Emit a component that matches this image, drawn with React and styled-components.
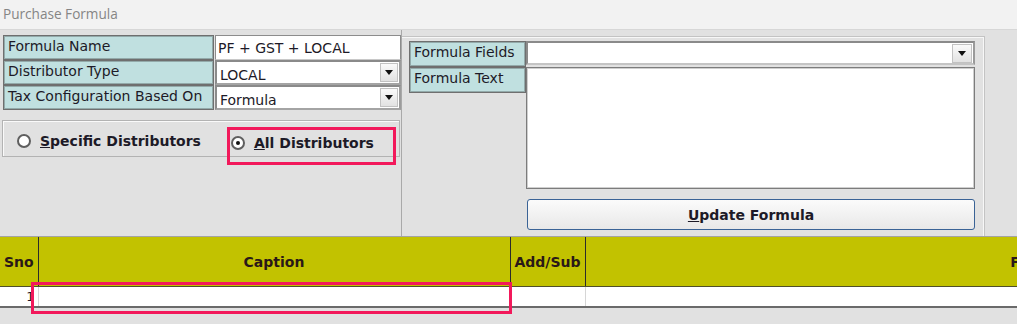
import styled, { createGlobalStyle } from 'styled-components';

const GlobalStyle = createGlobalStyle`
  body {
    margin: 0;
    background: #e1e1e1;
    font-family: "DejaVu Sans", Verdana, sans-serif;
    color: #1d1a27;
  }
`;

const App = () => {
  return (
    <Window>
      <GlobalStyle />
      <TitleBar>Purchase Formula</TitleBar>

      <Main>
        <LeftPane>
          <FormGrid>
            <Label>Formula Name</Label>
            <TextBox>PF + GST + LOCAL</TextBox>
            <Label>Distributor Type</Label>
            <Select>
              <span>LOCAL</span>
              <DropButton />
            </Select>
            <Label>Tax Configuration Based On</Label>
            <Select>
              <span>Formula</span>
              <DropButton />
            </Select>
          </FormGrid>

          <RadioGroup>
            <RadioItem>
              <Radio />
              <span><u>S</u>pecific Distributors</span>
            </RadioItem>
            <RadioItem $drop>
              <Radio $checked />
              <span><u>A</u>ll Distributors</span>
            </RadioItem>
            <Highlight $left={224} $top={6} $width={169} $height={38} />
          </RadioGroup>
        </LeftPane>

        <RightPane>
          <FieldGrid>
            <Label $tall>Formula Fields</Label>
            <Combo>
              <DropButton $wide />
            </Combo>
            <Label $tall>Formula Text</Label>
            <TextArea />
            <UpdateButton type="button"><u>U</u>pdate Formula</UpdateButton>
          </FieldGrid>
        </RightPane>
      </Main>

      <GridWrap>
        <Table>
          <colgroup>
            <col style={{ width: 38 }} />
            <col style={{ width: 472 }} />
            <col style={{ width: 75 }} />
            <col style={{ width: 915 }} />
          </colgroup>
          <thead>
            <tr>
              <HeadCell>Sno</HeadCell>
              <HeadCell>Caption</HeadCell>
              <HeadCell>Add/Sub</HeadCell>
              <HeadCell>Formula</HeadCell>
            </tr>
          </thead>
          <tbody>
            <tr>
              <Cell $align="right">1</Cell>
              <Cell />
              <Cell />
              <Cell />
            </tr>
          </tbody>
        </Table>
        <Highlight $left={31} $top={45} $width={481} $height={32} />
      </GridWrap>
    </Window>
  );
};

const Window = styled.div`
  width: 1017px;
  height: 324px;
  overflow: hidden;
  background: #e1e1e1;
`;

const TitleBar = styled.div`
  box-sizing: border-box;
  height: 30px;
  padding-left: 3px;
  background: #f2f2f2;
  border-bottom: 1px solid #d7d7d7;
  font-family: "Open Sans", sans-serif;
  font-size: 13.6px;
  line-height: 28px;
  color: #858585;
`;

const Main = styled.div`
  display: flex;
  height: 206px;
`;

const LeftPane = styled.div`
  box-sizing: border-box;
  width: 402px;
  padding: 5px 0 0 2px;
  border-right: 1px solid #a9a9a9;
  display: flex;
  flex-direction: column;
`;

const FormGrid = styled.div`
  display: grid;
  grid-template-columns: 211px 186px;
  grid-auto-rows: 25px;
  column-gap: 1px;
  margin-left: 1px;
`;

const Label = styled.div`
  box-sizing: border-box;
  height: ${(p) => (p.$tall ? '26px' : '25px')};
  padding: 2px 4px 0;
  background: #c0e0e0;
  border: 1px solid #6f6f6f;
  box-shadow: inset 0 0 0 1px #93aaaa;
  font-size: 14px;
  line-height: 17px;
  white-space: nowrap;
  overflow: hidden;
`;

const TextBox = styled.div`
  box-sizing: border-box;
  padding: 4px 2px 0;
  background: #fff;
  border: 1px solid #8c8c8c;
  border-bottom-color: #c8c8c8;
  font-size: 14px;
  line-height: 17px;
`;

const Select = styled.div`
  box-sizing: border-box;
  display: flex;
  align-items: center;
  justify-content: space-between;
  padding: 0 1px 0 3px;
  background: #fff;
  border: 2px solid #8a8a8a;
  border-right-color: #9c9c9c;
  border-bottom-color: #a4a4a4;
  font-size: 14px;

  span {
    padding-top: 4px;
  }
`;

const DropButton = styled.div`
  box-sizing: border-box;
  width: ${(p) => (p.$wide ? '20px' : '18px')};
  height: 19px;
  flex-shrink: 0;
  display: flex;
  align-items: center;
  justify-content: center;
  background: linear-gradient(#fafafa, #e2e2e2);
  border: 1px solid #c2c2c2;

  &::after {
    content: '';
    border-left: 4px solid transparent;
    border-right: 4px solid transparent;
    border-top: 5px solid #111;
  }
`;

const RadioGroup = styled.div`
  position: relative;
  box-sizing: border-box;
  width: 398px;
  height: 37px;
  margin-top: 10px;
  padding-left: 14px;
  display: flex;
  align-items: center;
  gap: 30px;
  border: 1px solid #b3b3b3;
  box-shadow: inset 1px 1px 0 #fafafa;
`;

const RadioItem = styled.label`
  display: flex;
  align-items: center;
  gap: 9px;
  margin-top: ${(p) => (p.$drop ? '8px' : '4px')};
  font-size: 14px;
  font-weight: bold;
  white-space: nowrap;

  u {
    text-decoration-thickness: 1px;
  }
`;

const Radio = styled.span`
  box-sizing: border-box;
  width: 14px;
  height: 14px;
  border-radius: 50%;
  border: 2px solid #5f5f5f;
  background: #fff;
  position: relative;

  ${(p) =>
    p.$checked &&
    `&::after {
      content: '';
      position: absolute;
      left: 3px;
      top: 3px;
      width: 4px;
      height: 4px;
      border-radius: 50%;
      background: #111;
    }`}
`;

const Highlight = styled.div`
  position: absolute;
  left: ${(p) => p.$left}px;
  top: ${(p) => p.$top}px;
  width: ${(p) => p.$width}px;
  height: ${(p) => p.$height}px;
  box-sizing: border-box;
  border: 3px solid #f2195b;
  pointer-events: none;
`;

const RightPane = styled.div`
  box-sizing: border-box;
  width: 583px;
  margin-top: 6px;
  padding: 4px 0 0 7px;
  border-top: 1px solid #c3c3c3;
  border-right: 1px solid #c3c3c3;
  box-shadow: inset 0 1px 0 #f7f7f7, inset -1px 0 0 #f7f7f7;
`;

const FieldGrid = styled.div`
  display: grid;
  grid-template-columns: 117px 449px;
  align-items: start;
`;

const Combo = styled.div`
  box-sizing: border-box;
  height: 24px;
  display: flex;
  justify-content: flex-end;
  align-items: center;
  padding-right: 1px;
  background: #fff;
  border: 2px solid #8a8a8a;
  border-bottom-color: #c4c4c4;
  border-right-color: #9a9a9a;
`;

const TextArea = styled.div`
  box-sizing: border-box;
  height: 122px;
  background: #fff;
  border: 1px solid #7c7c7c;
  box-shadow: inset 0 0 0 1px #cfcfcf;
`;

const UpdateButton = styled.button`
  grid-column: 2;
  height: 31px;
  margin: 10px 0 0 1px;
  padding: 0;
  background: linear-gradient(#fbfbfb, #e8e8e8);
  border: 1px solid #3a6396;
  border-radius: 3px;
  font-family: "DejaVu Sans", Verdana, sans-serif;
  font-size: 14px;
  font-weight: bold;
  color: #1d1a27;
`;

const GridWrap = styled.div`
  position: relative;
  height: 88px;
  border-top: 1px solid #a3a3a3;
`;

const Table = styled.table`
  table-layout: fixed;
  width: 1500px;
  border-collapse: collapse;
  border-bottom: 2px solid #6a6a6a;
`;

const HeadCell = styled.th`
  height: 49px;
  padding: 0 2px;
  background: #c2c200;
  border-right: 1px solid #2b2b2b;
  border-bottom: 1px solid #4f4f2a;
  font-size: 14px;
  font-weight: bold;
  color: #2a1818;
  text-align: center;
  white-space: nowrap;
  overflow: hidden;
`;

const Cell = styled.td`
  height: 19px;
  padding: 0 3px;
  background: #fff;
  border-right: 1px solid #d6d6d6;
  font-size: 13px;
  text-align: ${(p) => p.$align || 'left'};
`;

export default App;
